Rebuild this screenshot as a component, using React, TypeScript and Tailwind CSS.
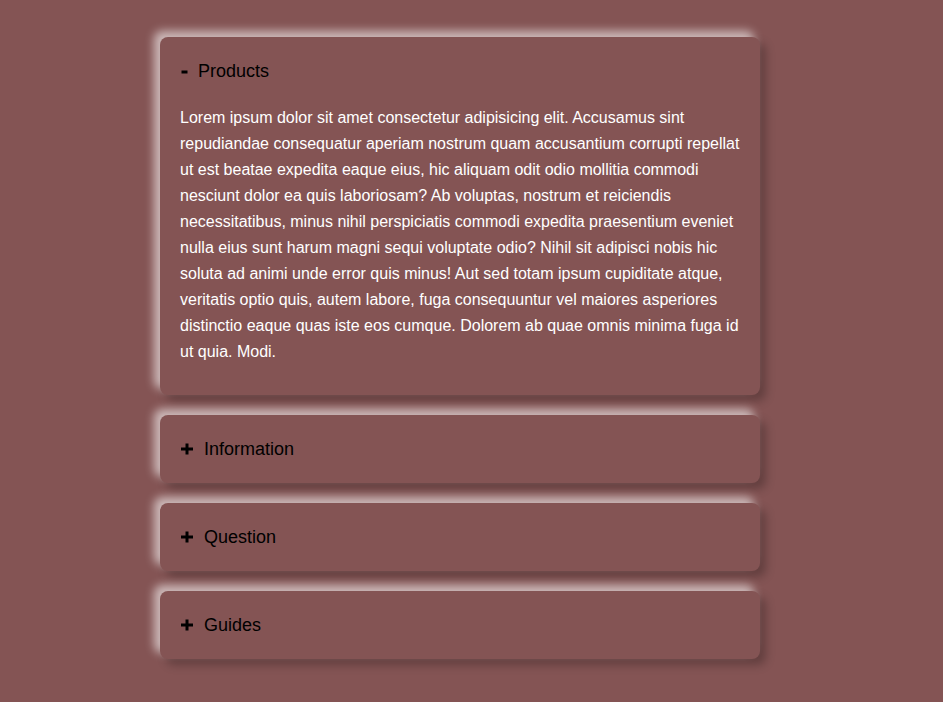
import { useState } from 'react';

const items = [
    {
        title: 'Products',
        body: 'Lorem ipsum dolor sit amet consectetur adipisicing elit. Accusamus sint repudiandae consequatur aperiam nostrum quam accusantium corrupti repellat ut est beatae expedita eaque eius, hic aliquam odit odio mollitia commodi nesciunt dolor ea quis laboriosam? Ab voluptas, nostrum et reiciendis necessitatibus, minus nihil perspiciatis commodi expedita praesentium eveniet nulla eius sunt harum magni sequi voluptate odio? Nihil sit adipisci nobis hic soluta ad animi unde error quis minus! Aut sed totam ipsum cupiditate atque, veritatis optio quis, autem labore, fuga consequuntur vel maiores asperiores distinctio eaque quas iste eos cumque. Dolorem ab quae omnis minima fuga id ut quia. Modi.',
    },
    { title: 'Information', body: 'Lorem ipsum dolor sit amet consectetur adipisicing elit.' },
    { title: 'Question', body: 'Lorem ipsum dolor sit amet consectetur adipisicing elit.' },
    { title: 'Guides', body: 'Lorem ipsum dolor sit amet consectetur adipisicing elit.' },
];

function ToggleIcon({ open }: { open: boolean }) {
    if (open) {
        return (
            <svg width="7" height="4" viewBox="0 0 7 4" className="mr-[10px] mt-[1px] shrink-0">
                <rect x="0.5" y="0.5" width="6" height="3" fill="#000" />
            </svg>
        );
    }
    return (
        <svg width="12" height="12" viewBox="0 0 12 12" className="mr-[11px] shrink-0">
            <path d="M6 0.5v11M0 6h12" stroke="#000" strokeWidth="3" />
        </svg>
    );
}

export default function App() {
    const [open, setOpen] = useState<number | null>(0);

    return (
        <div className="min-h-screen bg-[#845454] pt-[37px] font-['Liberation_Sans',Arial,sans-serif]">
            <div className="ml-[160px] flex w-[600px] flex-col gap-5">
                {items.map((item, i) => (
                    <div
                        key={item.title}
                        className="rounded-lg bg-[#845454] shadow-[-6px_-6px_10px_rgba(255,255,255,0.6),6px_6px_10px_rgba(0,0,0,0.25)]"
                    >
                        {/* header */}
                        <button
                            onClick={() => setOpen(open === i ? null : i)}
                            className="flex h-[68px] w-full items-center pl-[21px] pr-5 text-left text-[18px] text-black"
                        >
                            <ToggleIcon open={open === i} />
                            {item.title}
                        </button>
                        {open === i && (
                            <div className="px-5 pb-[30px] text-base leading-[26px] text-white">{item.body}</div>
                        )}
                    </div>
                ))}
            </div>
        </div>
    );
}
